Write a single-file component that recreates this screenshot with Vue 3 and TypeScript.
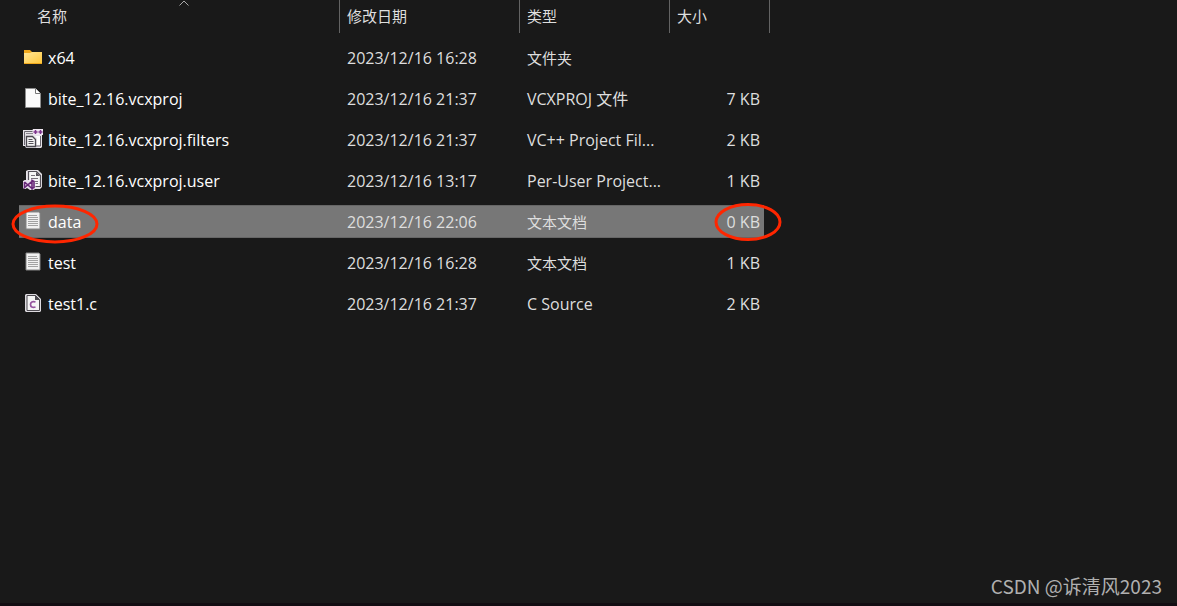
<script setup lang="ts">
type IconKind = 'folder' | 'blank' | 'filters' | 'user' | 'text' | 'csource'

interface FileEntry {
  name: string
  icon: IconKind
  modified: string
  type: string
  size: string
  selected?: boolean
}

const files: FileEntry[] = [
  { name: 'x64', icon: 'folder', modified: '2023/12/16 16:28', type: '文件夹', size: '' },
  { name: 'bite_12.16.vcxproj', icon: 'blank', modified: '2023/12/16 21:37', type: 'VCXPROJ 文件', size: '7 KB' },
  { name: 'bite_12.16.vcxproj.filters', icon: 'filters', modified: '2023/12/16 21:37', type: 'VC++ Project Fil...', size: '2 KB' },
  { name: 'bite_12.16.vcxproj.user', icon: 'user', modified: '2023/12/16 13:17', type: 'Per-User Project...', size: '1 KB' },
  { name: 'data', icon: 'text', modified: '2023/12/16 22:06', type: '文本文档', size: '0 KB', selected: true },
  { name: 'test', icon: 'text', modified: '2023/12/16 16:28', type: '文本文档', size: '1 KB' },
  { name: 'test1.c', icon: 'csource', modified: '2023/12/16 21:37', type: 'C Source', size: '2 KB' },
]

// Full-width scripts are set one step smaller than Latin text.
const isHan = (text: string): boolean => /^[\u4e00-\u9fff]+$/.test(text)
</script>

<template>
  <main class="explorer">
    <table class="files">
      <colgroup>
        <col class="col-name" />
        <col class="col-date" />
        <col class="col-type" />
        <col class="col-size" />
        <col class="col-end" />
      </colgroup>
      <thead>
        <tr>
          <th class="name-head" scope="col" aria-sort="ascending">
            名称
            <svg class="sort" viewBox="0 0 10 6" aria-hidden="true">
              <path d="M.5 5.500 5 1l4.500 4.500" fill="none" stroke="#a8a8a8" />
            </svg>
          </th>
          <th class="ruled" scope="col">修改日期</th>
          <th class="ruled" scope="col">类型</th>
          <th class="ruled" scope="col">大小</th>
          <td class="end"></td>
        </tr>
      </thead>
      <tbody>
        <tr v-for="file in files" :key="file.name" :class="{ selected: file.selected }">
          <td class="name">
            <div class="label">
              <svg class="icon" viewBox="0 0 20 20" aria-hidden="true">
                <g v-if="file.icon === 'folder'">
                  <path d="M1 3h6l2 2h10v12H1z" fill="#f0a81c" />
                  <path d="M1 6h6l2-1h10v11H1z" fill="url(#folder-face)" />
                  <defs>
                    <linearGradient id="folder-face" x1="0" y1="0" x2="1" y2="1">
                      <stop offset="0" stop-color="#ffe597" />
                      <stop offset="1" stop-color="#ffc83d" />
                    </linearGradient>
                  </defs>
                </g>
                <g v-else-if="file.icon === 'blank'">
                  <path d="M2.500.5h10l5 5v14h-15z" fill="#fafafa" stroke="#8d8d8d" />
                  <path d="M12.500.5v5h5" fill="#fff" stroke="#777" />
                </g>
                <g v-else-if="file.icon === 'filters'">
                  <path d="M0 1h9l2-1h8l1 1v4l-1 1v12l-1 1H3l-1-2H0z" fill="#e6e3e8" />
                  <path d="M1.500 16V2.500h8M17.500 7v10H13" fill="none" stroke="#6a666e" />
                  <path d="M3 4.500h7" stroke="#8c8890" />
                  <path d="M12 7h5v9h-3v-7z" fill="#fff" />
                  <path d="M3.500 7.500h6l3 3v7h-9z" fill="#f4f4f4" stroke="#49464d" stroke-width="1.300" />
                  <path d="M5.500 10.500h4M5.500 12.500h5M5.500 14.500h5" stroke="#57535b" />
                  <path d="M10 0h10v6H10z" fill="#efe6f1" />
                  <path d="M10.500 3h4M12.500 1v4M15.500 3h4M17.500 1v4" stroke="#7d328c" stroke-width="1.500" />
                </g>
                <g v-else-if="file.icon === 'user'">
                  <path d="M5 0h10l4 4v13l-2 2h-5l-2 1H7l-3-2-2 1-2-1v-6l2-2h1V1z" fill="#e6e3e8" />
                  <path d="M5.500 10V1.500h8l4 4v11h-5" fill="#f6f6f6" stroke="#555159" stroke-width="1.200" />
                  <path d="M13 2v4h4z" fill="#555159" />
                  <path d="M8 5.500h4M8 8.500h7M12 11.500h3M12.500 13.500h2.500" stroke="#77727b" />
                  <path d="M0 11l2-1 3 2L9 9l3 1v9l-3 1-4-3-3 2-2-1z" fill="#e9ddec" />
                  <path d="M1.500 12v5.500L9 11.500v7L1.500 12M9 10.500l2 1v6l-2 1z" fill="none" stroke="#672878" stroke-width="1.600" />
                </g>
                <g v-else-if="file.icon === 'text'">
                  <path d="M3 1h13l1 1v16H3z" fill="#f1f1f1" stroke="#858585" />
                  <path d="M5 4.500h9M5 6.500h10M5 8.500h10M5 10.500h10M5 12.500h10M5 14.500h10" stroke="#a2a2a2" />
                </g>
                <g v-else>
                  <path d="M3 1h10l5 5v12l-1 1H3l-1-1V2z" fill="#dedbe0" />
                  <path d="M4 2.500h8.500l4 4v11H4z" fill="#f6f6f6" stroke="#4d4a50" />
                  <path d="M12 2v5h5z" fill="#4d4a50" />
                  <path d="M12.500 9c-3-1-5 0-5 2.500s2 3.500 5 2.500" fill="none" stroke="#95559f" stroke-width="1.700" />
                </g>
              </svg>
              <span>{{ file.name }}</span>
            </div>
            <svg v-if="file.selected" class="mark mark-name" viewBox="0 0 88 40" aria-hidden="true">
              <ellipse cx="44" cy="20" rx="42" ry="18" />
            </svg>
          </td>
          <td>{{ file.modified }}</td>
          <td :class="{ han: isHan(file.type) }">{{ file.type }}</td>
          <td class="size">
            {{ file.size }}
            <svg v-if="file.selected" class="mark mark-size" viewBox="0 0 68 40" aria-hidden="true">
              <ellipse cx="34" cy="20" rx="32" ry="17.500" />
            </svg>
          </td>
        </tr>
      </tbody>
    </table>
    <footer class="credit">CSDN @诉清风2023</footer>
  </main>
</template>

<style>
body {
  margin: 0;
  background: #191919;
}
</style>

<style scoped>
.explorer {
  display: flex;
  flex-direction: column;
  justify-content: space-between;
  box-sizing: border-box;
  min-height: 100vh;
  border-bottom: 3px solid #120d12;
  background: #191919;
  color: #dedede;
  font: 15px/20px "Open Sans", "Noto Sans CJK SC", sans-serif;
}

.files {
  align-self: flex-start;
  table-layout: fixed;
  width: 751px;
  margin: -8px 0 0 19px;
  border-spacing: 0 8px;
}

.col-name { width: 320px; }
.col-date { width: 180px; }
.col-type { width: 150px; }
.col-size { width: 95px; }
.col-end { width: 6px; }

th,
td {
  box-sizing: border-box;
  height: 33px;
  padding: 0 4px 0 8px;
  text-align: left;
  font-weight: 400;
  white-space: nowrap;
}

th {
  padding-bottom: 2px;
}

tbody td {
  font-size: 16px;
}

tbody .han {
  font-size: 15px;
}

.name-head {
  position: relative;
  padding-left: 18px;
}

.sort {
  position: absolute;
  top: 0;
  left: 160px;
  width: 10px;
  height: 6px;
}

.ruled {
  padding-left: 7px;
  border-left: 1px solid #636363;
}

.end {
  padding: 0;
  border-right: 1px solid #636363;
}

tbody .name {
  position: relative;
  padding-left: 4px;
  color: #fff;
}

.label {
  display: flex;
  align-items: center;
  gap: 5px;
}

.icon {
  width: 20px;
  height: 20px;
  margin-bottom: 2px;
}

tbody .size {
  position: relative;
  text-align: right;
}

.selected td {
  border-top: 1px solid #666;
  border-bottom: 1px solid #666;
  background: #777;
}

.mark {
  position: absolute;
  z-index: 1;
  height: 40px;
  overflow: visible;
  fill: none;
  stroke: #ff2600;
  stroke-width: 3px;
}

.mark-name {
  top: -2px;
  left: -8px;
  width: 88px;
}

.mark-size {
  top: -4px;
  right: -18px;
  width: 68px;
}

.credit {
  padding: 0 15px 5px;
  color: #b0b0b0;
  font: 19px/24px "Noto Sans CJK SC", sans-serif;
  text-align: right;
}
</style>
